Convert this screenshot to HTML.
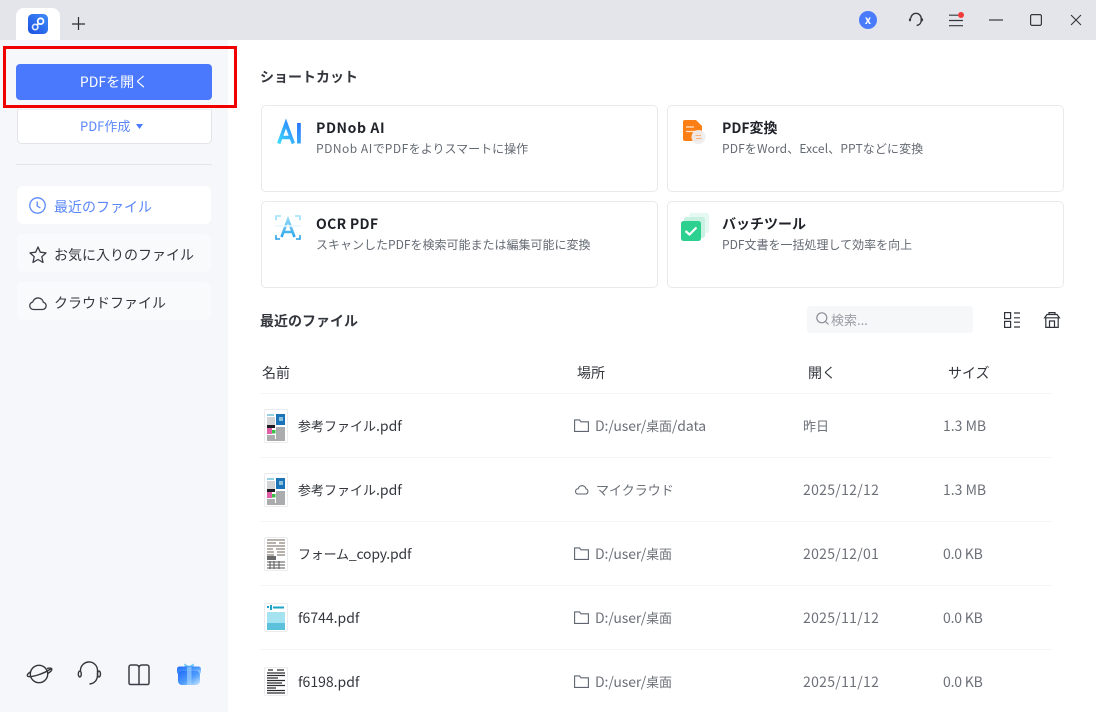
<!DOCTYPE html>
<html lang="ja"><head><meta charset="utf-8"><title>PDNob</title>
<style>
html,body{margin:0;padding:0;width:1096px;height:712px;overflow:hidden;background:#fff;font-family:"Noto Sans CJK JP","Liberation Sans",sans-serif;color:#33363d}
*{box-sizing:border-box}
.a{position:absolute}
.t{position:absolute;white-space:nowrap;line-height:20px;height:20px}
svg{position:absolute;overflow:visible}
.card{position:absolute;width:397px;height:87px;background:#fff;border:1px solid #e8e9ec;border-radius:5px}
.ct{font-size:14px;font-weight:700;color:#1f2329}
.cs{font-size:12px;color:#646a73}
.nav{position:absolute;left:17px;width:194px;height:38px;border-radius:6px;background:#f9fafc}
.hr{position:absolute;left:260px;width:792px;height:1px;background:#f5f5f6}
.f{font-size:14px;color:#33363d}
.g{font-size:14px;color:#6c7078}
.d{letter-spacing:.3px}
.j{font-size:13px}
.th{position:absolute;left:264px;width:24px;background:#fff;border:1px solid #ececef;border-radius:2px}
.h{font-size:14px;color:#33363d}
</style></head><body>
<div class="a" style="left:0;top:0;width:1096px;height:40px;background:#e4e5ea"></div>
<div class="a" style="left:16px;top:8px;width:44px;height:32px;background:#fff;border-radius:8px 8px 0 0"></div>
<div class="a" style="left:0;top:40px;width:228px;height:672px;background:#f6f7fa"></div>

<svg style="left:28px;top:14px" width="20" height="20" viewBox="0 0 20 20">
<defs><linearGradient id="lg" x1="1" y1="0" x2="0" y2="1"><stop offset="0" stop-color="#3f8dfb"/><stop offset="1" stop-color="#1d4fe0"/></linearGradient></defs>
<rect width="20" height="20" rx="4.500" fill="url(#lg)"/>
<circle cx="12.600" cy="7.200" r="2.900" fill="none" stroke="#fff" stroke-width="1.800"/><circle cx="7.200" cy="13" r="2.700" fill="none" stroke="#dbe6ff" stroke-width="1.700"/><path d="M9 11.200L10.700 9.300" stroke="#fff" stroke-width="1.800"/></svg>
<svg style="left:72px;top:17px" width="14" height="14"><path d="M0 7H13M6.500 0V13" stroke="#2c2f36" stroke-width="1.200"/></svg>

<div class="a" style="left:859px;top:11px;width:18px;height:18px;border-radius:50%;background:#4b7bfd"></div>
<div class="t" style="left:859px;top:10px;width:18px;text-align:center;color:#fff;font-size:11px;font-weight:700">x</div>
<svg style="left:908px;top:12px" width="16" height="16" viewBox="0 0 16 16" fill="none" stroke="#33363d" stroke-width="1.400"><path d="M2.800 6.500a5.200 5.200 0 0 1 10.400 0v2c0 2.500-1.800 4.500-4.500 5"/><ellipse cx="2" cy="7.800" rx=".9" ry="1.400" fill="#33363d" stroke-width=".5"/><ellipse cx="14" cy="7.800" rx=".9" ry="1.400" fill="#33363d" stroke-width=".5"/></svg>
<svg style="left:949px;top:14px" width="14" height="13"><path d="M0 1.200H9M0 6.500H14M0 11.700H14" stroke="#33363d" stroke-width="1.200"/></svg>
<div class="a" style="left:958px;top:12px;width:6px;height:6px;border-radius:50%;background:#f43b3b"></div>
<svg style="left:989px;top:19px" width="14" height="2"><path d="M0 1H14" stroke="#33363d" stroke-width="1.200"/></svg>
<svg style="left:1030px;top:14px" width="12" height="12"><rect x=".6" y=".6" width="10.800" height="10.800" rx="1.500" fill="none" stroke="#33363d" stroke-width="1.200"/></svg>
<svg style="left:1071px;top:15px" width="10" height="10"><path d="M0 0L10 10M10 0L0 10" stroke="#33363d" stroke-width="1.100"/></svg>

<!-- sidebar -->
<div class="a" style="left:16px;top:64px;width:196px;height:36px;border-radius:4px;background:#4a79fd"></div>
<div class="t" style="left:16px;top:72px;width:196px;text-align:center;color:#fff;font-size:14px">PDFを開く</div>
<div class="a" style="left:3px;top:46px;width:234px;height:62px;border:3px solid #f10000"></div>
<div class="a" style="left:17px;top:109px;width:195px;height:35px;border:1px solid #e3e4e9;border-top:0;border-radius:0 0 5px 5px;background:#fff"></div>
<div class="a" style="left:17px;top:109px;width:195px;height:1px;background:#eceef2"></div>
<div class="t" style="left:80px;top:116px;color:#5a87fb;font-size:13px">PDF作成</div>
<svg style="left:136px;top:124px" width="7" height="5"><path d="M0 0H7L3.500 5z" fill="#4a79fd"/></svg>
<div class="a" style="left:16px;top:164px;width:196px;height:1px;background:#e3e4e9"></div>

<div class="nav" style="top:186px;background:#fff"></div>
<svg style="left:29px;top:197px" width="18" height="18" fill="none" stroke="#5a87fb" stroke-width="1.300"><circle cx="8.500" cy="8.500" r="7.700"/><path d="M8.200 4.500V9L11.400 11"/></svg>
<div class="t" style="left:54px;top:197px;color:#5a87fb;font-size:14px">最近のファイル</div>
<div class="nav" style="top:234px"></div>
<svg style="left:29px;top:246px" width="18" height="18" fill="none" stroke="#3a3d45" stroke-width="1.300"><path d="M9 1L11.300 6.200 17 6.900 12.800 10.700 14 16.400 9 13.500 4 16.400 5.200 10.700 1 6.900 6.700 6.200z" stroke-linejoin="round"/></svg>
<div class="t" style="left:54px;top:245px;font-size:14px">お気に入りのファイル</div>
<div class="nav" style="top:282px"></div>
<svg style="left:29px;top:294px" width="18" height="17" fill="none" stroke="#3a3d45" stroke-width="1.300"><path d="M5 15.500H13.500a3.700 3.700 0 0 0 .8-7.300 5.400 5.400 0 0 0-10.500-.2A3.800 3.800 0 0 0 5 15.500z" stroke-linejoin="round"/></svg>
<div class="t" style="left:54px;top:293px;font-size:14px">クラウドファイル</div>

<svg style="left:26px;top:662px" width="27" height="24" fill="none" stroke="#33363d" stroke-width="1.400"><circle cx="13" cy="12" r="8.700"/><path d="M5 9.500C2.500 11 1 12.500 1.300 13.700c.5 1.500 5 1 10.500-.7s10-4 13.500-6.500"/><path d="M21 6.500c2.500-.7 4.500-.5 4.800.5.300 1.200-1.200 2.800-4 4.500"/></svg>
<svg style="left:77px;top:662px" width="25" height="24" fill="none" stroke="#33363d" stroke-width="1.400"><path d="M3.500 8.500V9a8.500 8.500 0 0 1 17-1v5c0 5-3 8.500-8 9"/><ellipse cx="2.800" cy="12" rx="1.500" ry="3"/><ellipse cx="22" cy="12" rx="1.500" ry="3"/></svg>
<svg style="left:128px;top:664px" width="22" height="22" fill="none" stroke="#3b3e46" stroke-width="1.500"><path d="M11 4C11 2 10 1 8 1H3a2 2 0 0 0-2 2v16a1.500 1.500 0 0 0 1.500 1.500H19.500A1.500 1.500 0 0 0 21 19V3a2 2 0 0 0-2-2H14c-2 0-3 1-3 3V20.500"/></svg>
<svg style="left:177px;top:662px" width="25" height="24" viewBox="0 0 25 24"><defs><linearGradient id="gf" x1="0" y1="0" x2="1" y2="1"><stop offset="0" stop-color="#1f68fb"/><stop offset=".55" stop-color="#4f9dfc"/><stop offset="1" stop-color="#cbe8ff"/></linearGradient></defs>
<path d="M7 1.500L12 4 17 1.500 16.500 6H8z" fill="#6cc8fb"/><rect x="0" y="4.500" width="24" height="8" rx="2.500" fill="url(#gf)"/><rect x="1" y="9" width="22" height="14" rx="4" fill="url(#gf)"/><rect x="10" y="5" width="4.500" height="18" fill="#a9d8fe" opacity=".6"/></svg>

<!-- main -->
<div class="t" style="left:260px;top:67px;font-size:14px;font-weight:700;color:#33363d">ショートカット</div>
<div class="card" style="left:261px;top:105px"></div>
<div class="card" style="left:667px;top:105px"></div>
<div class="card" style="left:261px;top:201px"></div>
<div class="card" style="left:667px;top:201px"></div>

<svg style="left:277px;top:122px" width="25" height="22" viewBox="0 0 25 22"><defs><linearGradient id="ai" gradientUnits="userSpaceOnUse" x1="0" y1="22" x2="24" y2="0"><stop offset="0" stop-color="#3be0ff"/><stop offset="1" stop-color="#2b6ffb"/></linearGradient></defs><path d="M1.700 21.500L9 1.500 16.300 21.500M4.500 15.500H13.500" fill="none" stroke="url(#ai)" stroke-width="3.400"/><rect x="20" y="1" width="3.800" height="20.500" fill="url(#ai)"/></svg>
<div class="t ct" style="left:316px;top:118px;letter-spacing:.6px">PDNob AI</div>
<div class="t cs" style="left:316px;top:139px"><span style="letter-spacing:.5px">PDNob AI</span>で<span style="letter-spacing:.5px">PDF</span>をよりスマートに操作</div>

<svg style="left:683px;top:120px" width="24" height="25" viewBox="0 0 24 25"><path d="M2 0H13L19 6V21H2a2 2 0 0 1-2-2V2a2 2 0 0 1 2-2z" fill="#fb7f14"/><path d="M3 7H11M3 11.500H13" stroke="#ffe8d2" stroke-width="1.300"/><circle cx="15.500" cy="17" r="7" fill="#eeeeef" opacity=".95"/><path d="M12.500 15.500H18M18.500 18.500H13" stroke="#fbb377" stroke-width="1"/></svg>
<div class="t ct" style="left:722px;top:118px">PDF変換</div>
<div class="t cs" style="left:722px;top:139px;letter-spacing:.12px">PDFをWord、Excel、PPTなどに変換</div>

<svg style="left:275px;top:215px" width="26" height="25" viewBox="0 0 26 25"><defs><linearGradient id="oc" gradientUnits="userSpaceOnUse" x1="0" y1="0" x2="0" y2="25"><stop offset="0" stop-color="#a4e4fc"/><stop offset="1" stop-color="#1f9ce6"/></linearGradient></defs><path d="M1 5V1H6M20 1H25V5M1 20V24H5M21 24H25V20" fill="none" stroke="url(#oc)" stroke-width="1.600"/><path d="M6.500 22L13 4.500 19.500 22M9 17H17" fill="none" stroke="url(#oc)" stroke-width="2.600"/><rect x="0" y="10" width="26" height="2" fill="#e8f7fd" opacity=".8"/></svg>
<div class="t ct" style="left:316px;top:214px;letter-spacing:.3px">OCR PDF</div>
<div class="t cs" style="left:316px;top:235px">スキャンしたPDFを検索可能または編集可能に変換</div>

<svg style="left:680px;top:213px" width="29" height="29" viewBox="0 0 29 29"><rect x="9" y="0" width="20" height="20" rx="2.500" fill="#e5f9f2"/><rect x="4" y="4" width="21" height="21" rx="2.500" fill="#c8f1e2"/><rect x="1" y="8" width="20" height="20" rx="2.500" fill="#2dd18f"/><path d="M5.500 18L9.500 21.500 16.500 14.500" fill="none" stroke="#fff" stroke-width="2.200"/></svg>
<div class="t ct" style="left:722px;top:214px">バッチツール</div>
<div class="t cs" style="left:722px;top:235px">PDF文書を一括処理して効率を向上</div>

<div class="t" style="left:260px;top:311px;font-size:14px;font-weight:700;color:#33363d">最近のファイル</div>
<div class="a" style="left:807px;top:306px;width:166px;height:27px;background:#f6f7f9;border-radius:3px"></div>
<svg style="left:816px;top:312px" width="14" height="14" fill="none" stroke="#8a8e96" stroke-width="1.200"><circle cx="5.800" cy="5.800" r="5"/><path d="M9.500 9.500L12.500 12.500"/></svg>
<div class="t" style="left:831px;top:310px;font-size:13px;color:#9a9da4">検索...</div>
<svg style="left:1004px;top:312px" width="16" height="16" fill="none" stroke="#2f323a" stroke-width="1.200"><rect x=".6" y=".6" width="6" height="6"/><rect x=".6" y="9.400" width="6" height="6"/><path d="M10 1H16M10 5.800H16M10 10.200H16M10 15H16"/></svg>
<svg style="left:1044px;top:312px" width="16" height="16" fill="none" stroke="#2f323a" stroke-width="1.200"><path d="M.6 5.800L3 2.500H13L15.400 5.800zM5 2.500V.6H11V2.500M1.800 5.800V15.400H14.200V5.800M5.500 15.400V9H10.500V15.400"/></svg>

<div class="t h" style="left:262px;top:363px">名前</div>
<div class="t h" style="left:577px;top:363px">場所</div>
<div class="t h" style="left:808px;top:363px">開く</div>
<div class="t h" style="left:948px;top:363px">サイズ</div>
<div class="hr" style="top:393px"></div>
<div class="hr" style="top:457px"></div>
<div class="hr" style="top:521px"></div>
<div class="hr" style="top:585px"></div>
<div class="hr" style="top:649px"></div>

<!-- rows -->
<div class="th" style="top:409px;height:34px"></div>
<svg style="left:264px;top:409px" width="24" height="34"><path d="M3 6H10" stroke="#2a9fc4" stroke-width="1"/><path d="M3 9H11M3 11H11M3 13H11M3 15H11" stroke="#a5a8ad" stroke-width="1"/><rect x="12" y="5" width="9" height="11" fill="#1c74b8"/><rect x="15" y="8" width="4" height="4" fill="#8cc0dc"/><rect x="3" y="16" width="8" height="3" fill="#1e1e22"/><rect x="3" y="19" width="5" height="6" fill="#e060a8"/><rect x="8" y="21" width="3.500" height="3.500" fill="#39c24a"/><path d="M12 19H21M12 21H21M12 23H21M12 25H21M12 27H21M12 29H21M3 27H11M3 29H11M3 31H21" stroke="#55585e" stroke-width="1"/></svg>
<div class="t f" style="left:298px;top:416px"><span class="j">参考ファイル</span>.pdf</div>
<svg style="left:574px;top:419px" width="15" height="13" fill="none" stroke="#5e6570" stroke-width="1.100"><path d="M.6 12.400V.9H5.500L7 2.800H14.400V12.400z"/></svg>
<div class="t g" style="left:595px;top:416px;letter-spacing:-.1px">D:/user/<span class="j">桌面</span>/data</div>
<div class="t g j" style="left:803px;top:416px">昨日</div>
<div class="t g" style="left:943px;top:416px">1.3 MB</div>

<div class="th" style="top:473px;height:34px"></div>
<svg style="left:264px;top:473px" width="24" height="34"><path d="M3 6H10" stroke="#2a9fc4" stroke-width="1"/><path d="M3 9H11M3 11H11M3 13H11M3 15H11" stroke="#a5a8ad" stroke-width="1"/><rect x="12" y="5" width="9" height="11" fill="#1c74b8"/><rect x="15" y="8" width="4" height="4" fill="#8cc0dc"/><rect x="3" y="16" width="8" height="3" fill="#1e1e22"/><rect x="3" y="19" width="5" height="6" fill="#e060a8"/><rect x="8" y="21" width="3.500" height="3.500" fill="#39c24a"/><path d="M12 19H21M12 21H21M12 23H21M12 25H21M12 27H21M12 29H21M3 27H11M3 29H11M3 31H21" stroke="#55585e" stroke-width="1"/></svg>
<div class="t f" style="left:298px;top:480px"><span class="j">参考ファイル</span>.pdf</div>
<svg style="left:574px;top:483px" width="15" height="12" fill="none" stroke="#5e6570" stroke-width="1.100"><path d="M3.500 11H11.500a2.600 2.600 0 0 0 .5-5.100 4 4 0 0 0-7.800-.2A2.700 2.700 0 0 0 3.500 11z"/></svg>
<div class="t g j" style="left:596px;top:480px">マイクラウド</div>
<div class="t g d" style="left:803px;top:480px">2025/12/12</div>
<div class="t g" style="left:943px;top:480px">1.3 MB</div>

<div class="th" style="top:537px;height:34px"></div>
<svg style="left:264px;top:537px" width="24" height="34"><path d="M3 3H21M3 6H12M15 6H21M3 9H21M3 12H9M12 12H21M3 15H10M13 15H21M3 18H10M13 18H21" stroke="#8b8278" stroke-width="1.200"/><rect x="3" y="19" width="9" height="4" fill="#6a6a6a"/><path d="M3 25H21M3 28H21M3 31H21M6 24V32M10 24V32M15 24V32" stroke="#555" stroke-width="1"/></svg>
<div class="t f" style="left:298px;top:544px;letter-spacing:-.2px"><span class="j">フォーム</span>_copy.pdf</div>
<svg style="left:574px;top:547px" width="15" height="13" fill="none" stroke="#5e6570" stroke-width="1.100"><path d="M.6 12.400V.9H5.500L7 2.800H14.400V12.400z"/></svg>
<div class="t g" style="left:595px;top:544px;letter-spacing:-.1px">D:/user/<span class="j">桌面</span></div>
<div class="t g d" style="left:803px;top:544px">2025/12/01</div>
<div class="t g" style="left:943px;top:544px;letter-spacing:-.2px">0.0 KB</div>

<div class="th" style="top:603px;height:29px"></div>
<svg style="left:264px;top:603px" width="24" height="29"><path d="M3 4H5M7 2V7M9 4.500H20" stroke="#1aa4c8" stroke-width="2"/><rect x="3" y="9" width="18" height="18" fill="#a6e3f0"/><rect x="3" y="20" width="18" height="7" fill="#5cc2dc"/></svg>
<div class="t f" style="left:298px;top:608px">f6744.pdf</div>
<svg style="left:574px;top:611px" width="15" height="13" fill="none" stroke="#5e6570" stroke-width="1.100"><path d="M.6 12.400V.9H5.500L7 2.800H14.400V12.400z"/></svg>
<div class="t g" style="left:595px;top:608px;letter-spacing:-.1px">D:/user/<span class="j">桌面</span></div>
<div class="t g d" style="left:803px;top:608px">2025/11/12</div>
<div class="t g" style="left:943px;top:608px;letter-spacing:-.2px">0.0 KB</div>

<div class="th" style="top:667px;height:29px"></div>
<svg style="left:264px;top:667px" width="24" height="29"><path d="M4 3H9M13 3H20M3 6H21M3 8.500H21M3 11H14M3 13.500H21M3 16H18M3 18.500H21M3 21H12M3 23.500H21M3 26H21" stroke="#2c2c30" stroke-width="1.200"/></svg>
<div class="t f" style="left:298px;top:672px">f6198.pdf</div>
<svg style="left:574px;top:675px" width="15" height="13" fill="none" stroke="#5e6570" stroke-width="1.100"><path d="M.6 12.400V.9H5.500L7 2.800H14.400V12.400z"/></svg>
<div class="t g" style="left:595px;top:672px;letter-spacing:-.1px">D:/user/<span class="j">桌面</span></div>
<div class="t g d" style="left:803px;top:672px">2025/11/12</div>
<div class="t g" style="left:943px;top:672px;letter-spacing:-.2px">0.0 KB</div>
</body></html>
